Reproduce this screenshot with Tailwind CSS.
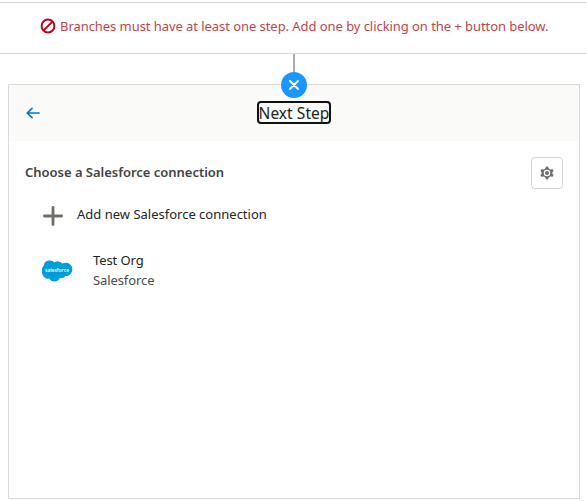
<!DOCTYPE html>
<html lang="en">
<head>
<meta charset="utf-8">
<title>Next Step</title>
<script src="https://cdn.jsdelivr.net/npm/@tailwindcss/browser@4"></script>
</head>
<body class="h-[501px] w-[587px] overflow-hidden bg-white pt-[2px] font-['Noto_Sans','Open_Sans',sans-serif] text-[13px] leading-5 text-[#242424]">
<div class="flex h-[52px] items-center border-y border-[#d9d9d9] pb-[4px] pl-10 text-[#c0444a]">
  <svg class="mr-1 size-4 shrink-0" viewBox="0 0 16 16" fill="none" stroke="#ba0517" stroke-width="2"><circle cx="8" cy="8" r="6.4"/><path d="M3.6 12.4 12.4 3.6"/></svg>
  <span class="whitespace-nowrap tracking-[-0.06px]">Branches must have at least one step. Add one by clicking on the + button below.</span>
</div>
<div class="relative flex h-[30px] justify-center">
  <div class="h-5 w-[2px] bg-[#aeaaa7]"></div>
  <div class="absolute left-[281px] top-[18px] flex size-[26px] items-center justify-center rounded-full bg-[#1b96ff]">
    <svg class="size-[10px]" viewBox="0 0 10 10" fill="none" stroke="#fff" stroke-width="1.8" stroke-linecap="round"><path d="m1 1 8 8M9 1 1 9"/></svg>
  </div>
</div>
<main class="ml-2 h-[415px] w-[572px] border border-[#d9d9d9]">
  <header class="grid h-14 grid-cols-[1fr_74px_1fr] items-center bg-[#fafaf9] pb-px">
    <svg class="ml-[17px] h-3 w-[14px]" viewBox="0 0 14 12" fill="none" stroke="#0176d3" stroke-width="1.7" stroke-linecap="round" stroke-linejoin="round"><path d="M13 6H1.2M6 1.3 1.2 6 6 10.7"/></svg>
    <h1 class="flex h-[23px] w-[74px] items-center justify-center whitespace-nowrap rounded-[4px] border-2 border-[#101010] text-[15.5px] leading-[22px] tracking-[0.05px]">Next Step</h1>
  </header>
  <section class="px-4 pt-4">
    <div class="flex items-center justify-between">
      <h2 class="whitespace-nowrap pb-[2px] font-semibold text-[#444] tracking-[-0.02px]">Choose a Salesforce connection</h2>
      <button class="flex size-8 items-center justify-center rounded-[4px] border border-[#d4d4d4]" aria-label="Settings">
        <svg class="size-[14px]" viewBox="0 0 14 14" fill="none"><path fill="#706e6b" fill-rule="evenodd" d="M6.3.5h1.400l1.300 2.300 1.200.7 2.500-.2.800 1.400-1.400 2.300 1.400 2.300-.8 1.400-2.500-.2-1.200.7-1.300 2.300H6.300L5 11.200l-1.200-.7-2.500.2-.8-1.400L1.900 7 .5 4.700l.8-1.400 2.500.2L5 2.800zM7 3.700a3.300 3.300 0 1 0 0 6.600 3.300 3.300 0 0 0 0-6.600z"/><circle cx="7" cy="7" r="2" fill="#706e6b"/></svg>
      </button>
    </div>
    <div class="mt-[15px] flex h-5 items-center pl-[18px]">
      <svg class="mr-[14px] mt-[4px] size-5" viewBox="0 0 20 20" stroke="#706e6b" stroke-width="2.8" stroke-linecap="round"><path d="M10 1.400v17.200M1.400 10h17.200"/></svg>
      <span class="whitespace-nowrap">Add new Salesforce connection</span>
    </div>
    <div class="mt-[26px] flex h-10 items-center pl-[16px]">
      <svg class="mr-5 mt-[2px] h-[22px] w-8" viewBox="0 0 32 22"><path fill="#009ddc" d="M13.400 2.600A5.700 5.700 0 0 1 21.500 3.600a7 7 0 0 1 3.500-.8c3.700 0 6.300 3 6.300 6.600s-3 7.100-7.100 6.600c-1 1.900-3.200 2.700-5.200 1.800-.9 2.300-2.900 3.700-5.700 3.700-2.300-.1-4-1.200-4.900-3-3 .6-5.400-.6-6.400-3.200C.7 13.700.9 11.500 1 10.400.8 7.800 2.100 6.100 3 5.300 2.800 2.500 5.500.4 8.600.4c2.100 0 3.900.8 4.800 2.200z"/><text x="16" y="12" fill="#fff" font-family="Open Sans, sans-serif" font-size="5.500" font-weight="600" text-anchor="middle" textLength="24" lengthAdjust="spacingAndGlyphs">salesforce</text></svg>
      <div class="whitespace-nowrap"><div class="tracking-[-0.1px]">Test Org</div><div class="tracking-[-0.1px] text-[#4a4a4a]">Salesforce</div></div>
    </div>
  </section>
</main>
</body>
</html>
